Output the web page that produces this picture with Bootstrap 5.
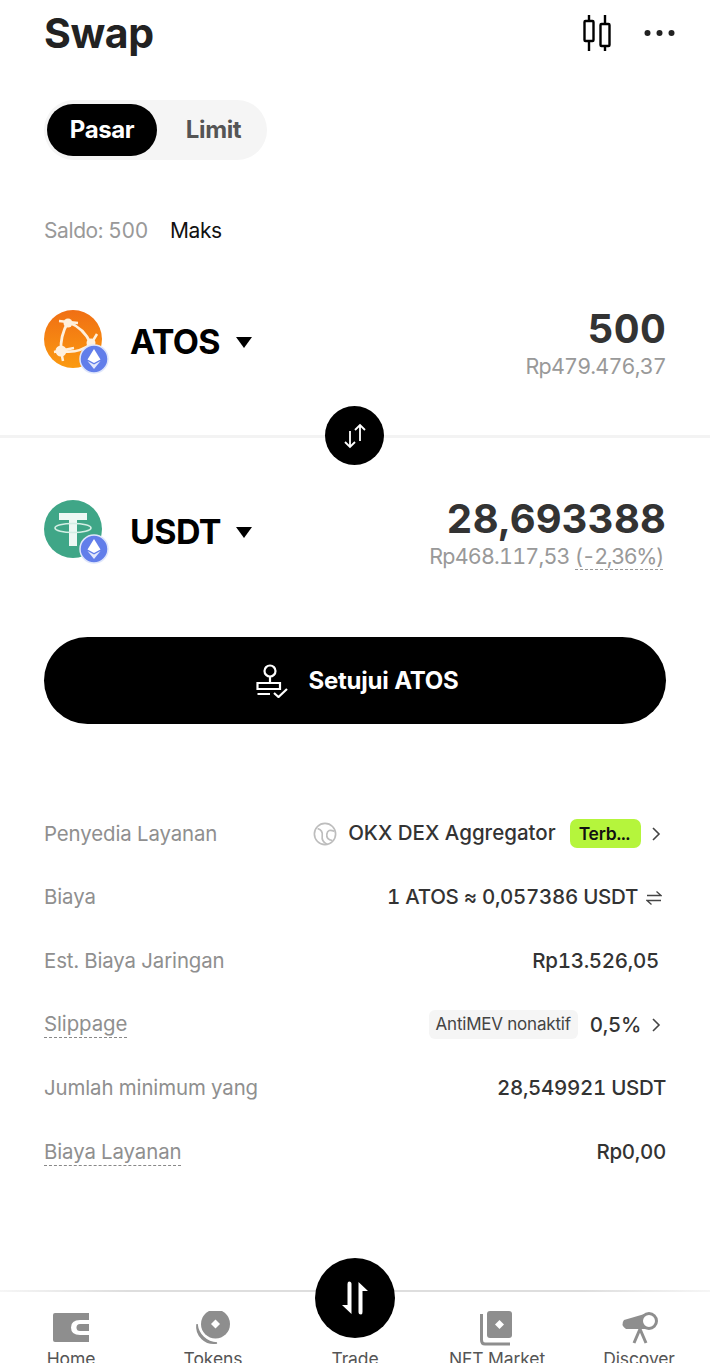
<!DOCTYPE html>
<html lang="id">
<head>
  <meta charset="UTF-8">
  <title>Swap</title>
  <link href="https://cdn.jsdelivr.net/npm/bootstrap@5.3.0/dist/css/bootstrap.min.css" rel="stylesheet">
  <style>
    html, body { height: 1363px; overflow: hidden; }
    body { font-family: Inter, "Liberation Sans", sans-serif; background: #fff; color: #333; font-variant-numeric: tabular-nums; }
    .page-wrap { height: 1363px; }
    .pad-x { padding-left: 44px; padding-right: 44px; }

    .top-bar { height: 66px; padding-right: 35px; }
    .swap-title { font-size: 41px; font-weight: 700; color: #222; letter-spacing: -.4px; line-height: 66px; margin: 0; }
    .top-icons { gap: 32px; }

    .seg-box { width: 223px; height: 60px; margin-top: 34px; padding: 4px 3px; background: #f5f5f5; border-radius: 30px; }
    .seg-on { width: 110px; background: #000; color: #fff; border-radius: 26px; font-size: 24px; font-weight: 700; letter-spacing: -.4px; }
    .seg-off { flex: 1; color: #555; font-size: 24px; font-weight: 700; letter-spacing: -.4px; padding-left: 6px; }

    .saldo-line { margin-top: 57px; font-size: 21px; line-height: 28px; gap: 22px; letter-spacing: -.4px; }
    .saldo-txt { color: #999; }
    .maks-txt { color: #111; }

    .token-row { height: 76px; }
    .row-atos { margin-top: 56px; }
    .coin-wrap { position: relative; width: 58px; height: 58px; margin-right: 28px; flex: none; }
    .coin-wrap > svg { display: block; }
    .eth-badge { position: absolute; right: -7px; bottom: -6px; width: 30px; height: 30px; }
    .coin-name { font-size: 34px; font-weight: 700; color: #000; letter-spacing: -.6px; line-height: 40px; margin-top: 6px; }
    .caret-down { width: 0; height: 0; border-left: 8.5px solid transparent; border-right: 8.5px solid transparent; border-top: 11px solid #000; margin-left: 15.5px; margin-top: 6px; }
    .amount-box { margin-top: 7px; }
    .amount { font-size: 40px; font-weight: 700; color: #333; line-height: 46px; letter-spacing: .2px; }
    .fiat { font-size: 21.5px; color: #999; line-height: 28px; letter-spacing: -.8px; }
    .dash-under { border-bottom: 1px dashed #999; margin-right: 3px; letter-spacing: -1.4px; }

    .mid-split { position: relative; height: 3px; background: #f3f3f3; margin-top: 58px; margin-bottom: 53px; }
    .flip-btn { position: absolute; left: 325px; top: -29px; width: 59px; height: 59px; border-radius: 50%; background: #000; border: 0; padding: 0; }

    .approve-btn { height: 87px; margin-top: 70px; padding-left: 17px; background: #000; border: 0; border-radius: 44px; color: #fff; font-size: 24px; font-weight: 700; gap: 20px; letter-spacing: -.2px; width: 100%; }
    .approve-btn:hover { background: #000; color: #fff; }

    .detail-list { margin-top: 78px; }
    .detail-row { height: 63.7px; font-size: 20.5px; }
    .detail-lbl { color: #8f8f8f; font-size: 20.4px; letter-spacing: -.1px; }
    .detail-val { color: #333; font-weight: 500; letter-spacing: -.3px; }
    .dash-lbl { border-bottom: 1px dashed #888; line-height: 26px; }
    .chev { margin-left: 7px; margin-right: 2px; flex: none; }
    .okx-mark { margin-right: 11px; flex: none; }
    .okx-name { letter-spacing: 0; }
    .best-tag { background: #b5f53c; color: #111; font-size: 17.5px; font-weight: 600; border-radius: 7px; padding: 0 11px 0 9px; height: 29px; line-height: 29px; margin-left: 14px; letter-spacing: -.2px; }
    .mev-tag { background: #f5f5f5; color: #444; font-size: 17px; font-weight: 400; border-radius: 6px; padding: 0 7px; height: 29px; line-height: 29px; margin-right: 12px; letter-spacing: -.2px; }
    .fee-val { margin-right: 7px; }

    .bottom-bar { position: absolute; left: 0; right: 0; top: 1290px; height: 73px; border-top: 2px solid #e4e4e4; border-image: linear-gradient(90deg, #f6f6f6, #dedede 18%, #dedede 82%, #f6f6f6) 1; background: #fff; overflow: hidden; padding-top: 19px; }
    .tab-item { width: 142px; color: #555; font-size: 17.5px; line-height: 22px; flex: none; letter-spacing: -.1px; }
    .tab-item svg { display: block; flex: none; margin-bottom: 1px; }
    .tab-space { height: 36px; flex: none; margin-bottom: 1px; }
    .tab-item span { flex: none; }
    .trade-btn { position: absolute; left: 315px; top: 1258px; width: 80px; height: 80px; border-radius: 50%; background: #000; border: 0; padding: 0; }
  </style>
</head>
<body>
<div class="page-wrap position-relative">

  <div class="top-bar pad-x d-flex justify-content-between align-items-center">
    <h1 class="swap-title">Swap</h1>
    <div class="d-flex align-items-center top-icons">
      <svg width="30" height="36" viewBox="0 0 30 36" fill="none" stroke="#000" stroke-width="2.4">
        <path d="M7 0v6M7 26v10M23 0v9M23 31v5"/>
        <rect x="2.500" y="6" width="9" height="20" rx="1"/>
        <rect x="18.500" y="9" width="9" height="22" rx="1"/>
      </svg>
      <svg width="31" height="8" viewBox="0 0 31 8" fill="#222">
        <circle cx="3.500" cy="4" r="3"/><circle cx="15.500" cy="4" r="3"/><circle cx="27.500" cy="4" r="3"/>
      </svg>
    </div>
  </div>

  <div class="pad-x">
    <div class="seg-box d-flex">
      <div class="seg-on d-flex align-items-center justify-content-center">Pasar</div>
      <div class="seg-off d-flex align-items-center justify-content-center">Limit</div>
    </div>
    <div class="saldo-line d-flex">
      <span class="saldo-txt">Saldo: 500</span>
      <span class="maks-txt">Maks</span>
    </div>
  </div>

  <div class="token-row row-atos pad-x d-flex justify-content-between align-items-center">
    <div class="d-flex align-items-center">
      <div class="coin-wrap">
        <svg width="58" height="58" viewBox="0 0 58 58">
          <defs>
            <linearGradient id="atosGrad" x1="0" y1="0" x2="0" y2="1">
              <stop offset="0" stop-color="#f06f14"/><stop offset="1" stop-color="#fb9a10"/>
            </linearGradient>
          </defs>
          <circle cx="29" cy="29" r="29" fill="url(#atosGrad)"/>
          <path d="M24 12Q40 18 47 34Q34 44 17 41Q16 26 24 12" fill="none" stroke="#fff0dc" stroke-width="2.800"/>
          <path d="M15 11L34 13M17 41L19 51M47 34L53 24M10 42L30 38" stroke="#fff0dc" stroke-width="2.500"/>
          <circle cx="24" cy="13" r="4.500" fill="#fff0dc"/>
          <circle cx="17" cy="41" r="5.500" fill="#fff0dc"/>
          <circle cx="47" cy="33" r="4.500" fill="#fff0dc"/>
        </svg>
        <svg class="eth-badge" viewBox="0 0 30 30">
          <circle cx="15" cy="15" r="14" fill="#627eea" stroke="#dfe6fb" stroke-width="1.500"/>
          <path d="M15 5L8.500 15.500L15 19L21.500 15.500Z" fill="#fff"/>
          <path d="M8.500 17L15 25L21.500 17L15 20.500Z" fill="#e4e9fb"/>
        </svg>
      </div>
      <span class="coin-name">ATOS</span>
      <span class="caret-down"></span>
    </div>
    <div class="text-end amount-box">
      <div class="amount">500</div>
      <div class="fiat">Rp479.476,37</div>
    </div>
  </div>

  <div class="mid-split">
    <button class="flip-btn d-flex align-items-center justify-content-center" type="button" aria-label="Tukar">
      <svg width="24" height="26" viewBox="0 0 24 26" fill="none" stroke="#fff" stroke-width="1.800">
        <path d="M7 8v16M2 19l5 5 5-5M17 18V2M12 7l5-5 5 5"/>
      </svg>
    </button>
  </div>

  <div class="token-row pad-x d-flex justify-content-between align-items-center">
    <div class="d-flex align-items-center">
      <div class="coin-wrap">
        <svg width="58" height="58" viewBox="0 0 58 58">
          <circle cx="29" cy="29" r="29" fill="#3fa687"/>
          <path d="M15 13H43V20H33V46H25V20H15Z" fill="#eef8f4"/>
          <ellipse cx="29" cy="28" rx="18" ry="4.500" fill="none" stroke="#d3eee4" stroke-width="1.600"/>
        </svg>
        <svg class="eth-badge" viewBox="0 0 30 30">
          <circle cx="15" cy="15" r="14" fill="#627eea" stroke="#dfe6fb" stroke-width="1.500"/>
          <path d="M15 5L8.500 15.500L15 19L21.500 15.500Z" fill="#fff"/>
          <path d="M8.500 17L15 25L21.500 17L15 20.500Z" fill="#e4e9fb"/>
        </svg>
      </div>
      <span class="coin-name">USDT</span>
      <span class="caret-down"></span>
    </div>
    <div class="text-end amount-box">
      <div class="amount">28,693388</div>
      <div class="fiat">Rp468.117,53 <span class="dash-under">(-2,36%)</span></div>
    </div>
  </div>

  <div class="pad-x">
    <button class="approve-btn btn d-flex align-items-center justify-content-center" type="button">
      <svg width="32" height="34" viewBox="0 0 32 34" fill="none" stroke="#fff" stroke-width="2.200">
        <circle cx="14" cy="7" r="5.500"/>
        <path d="M14 12.500V19M1.500 19H24V25H1.500ZM1.500 30H14M18 29l4.500 4L31 25"/>
      </svg>
      <span>Setujui ATOS</span>
    </button>

    <div class="detail-list">
      <div class="detail-row d-flex justify-content-between align-items-center">
        <span class="detail-lbl">Penyedia Layanan</span>
        <div class="d-flex align-items-center detail-val">
          <svg class="okx-mark" width="24" height="24" viewBox="0 0 26 26" fill="none" stroke="#bdbdbd" stroke-width="1.800">
            <circle cx="13" cy="13" r="11.500"/>
            <path d="M5 7q6 2 5 8t5 9M23 10q-7-3-8 3t6 7"/>
          </svg>
          <span class="okx-name">OKX DEX Aggregator</span>
          <span class="best-tag">Terb...</span>
          <svg class="chev" width="16" height="16" viewBox="0 0 16 16" fill="none" stroke="#444" stroke-width="1.600"><path d="M5 2l6 6-6 6"/></svg>
        </div>
      </div>
      <div class="detail-row d-flex justify-content-between align-items-center">
        <span class="detail-lbl">Biaya</span>
        <div class="d-flex align-items-center detail-val">
          <span>1 ATOS ≈ 0,057386 USDT</span>
          <svg class="ms-2 me-1" width="16" height="16" viewBox="0 0 16 16" fill="none" stroke="#444" stroke-width="1.300"><path d="M1 5.500H15L10.500 1.500M15 10.500H1L5.500 14.500"/></svg>
        </div>
      </div>
      <div class="detail-row d-flex justify-content-between align-items-center">
        <span class="detail-lbl">Est. Biaya Jaringan</span>
        <span class="detail-val fee-val">Rp13.526,05</span>
      </div>
      <div class="detail-row d-flex justify-content-between align-items-center">
        <span class="detail-lbl dash-lbl">Slippage</span>
        <div class="d-flex align-items-center detail-val">
          <span class="mev-tag">AntiMEV nonaktif</span>
          <span>0,5%</span>
          <svg class="chev" width="16" height="16" viewBox="0 0 16 16" fill="none" stroke="#444" stroke-width="1.600"><path d="M5 2l6 6-6 6"/></svg>
        </div>
      </div>
      <div class="detail-row d-flex justify-content-between align-items-center">
        <span class="detail-lbl">Jumlah minimum yang</span>
        <span class="detail-val">28,549921 USDT</span>
      </div>
      <div class="detail-row d-flex justify-content-between align-items-center">
        <span class="detail-lbl dash-lbl">Biaya Layanan</span>
        <span class="detail-val">Rp0,00</span>
      </div>
    </div>
  </div>

  <nav class="bottom-bar d-flex justify-content-center">
    <div class="tab-item d-flex flex-column align-items-center">
      <svg width="38" height="36" viewBox="0 0 38 36" fill="#8e8e8e">
        <path d="M3 2H37V9H28Q19 9 19 16.500T28 24H37V31H3Q1 31 1 29V4Q1 2 3 2Z"/>
        <path d="M28 13H37V20H28Q24.500 20 24.500 16.500T28 13Z"/>
      </svg>
      <span>Home</span>
    </div>
    <div class="tab-item d-flex flex-column align-items-center">
      <svg width="36" height="36" viewBox="0 0 36 36">
        <path d="M2 13A17 17 0 0 0 22 32A21 21 0 0 1 2 13Z" fill="#8e8e8e" stroke="#8e8e8e" stroke-width="1.500"/>
        <circle cx="20.500" cy="13" r="14.500" fill="#8e8e8e"/>
        <path d="M20.500 8.500L25 13L20.500 17.500L16 13Z" fill="#fff"/>
      </svg>
      <span>Tokens</span>
    </div>
    <div class="tab-item d-flex flex-column align-items-center">
      <div class="tab-space"></div>
      <span>Trade</span>
    </div>
    <div class="tab-item d-flex flex-column align-items-center">
      <svg width="34" height="36" viewBox="0 0 34 36" fill="#8e8e8e">
        <rect x="7" y="0" width="25" height="27" rx="3"/>
        <path d="M19.500 9L24 13.500L19.500 18L15 13.500Z" fill="#fff"/>
        <path d="M1.500 3V29Q1.500 33 5 33H30" fill="none" stroke="#8e8e8e" stroke-width="3"/>
      </svg>
      <span>NFT Market</span>
    </div>
    <div class="tab-item d-flex flex-column align-items-center">
      <svg width="38" height="36" viewBox="0 0 38 36" fill="#8e8e8e">
        <path d="M4 9L28 2V18L6 18Q0 14 4 9Z"/>
        <circle cx="29" cy="10" r="7.500" fill="#fff" stroke="#8e8e8e" stroke-width="3"/>
        <path d="M20 18L14 32M20 18L26 32" fill="none" stroke="#8e8e8e" stroke-width="3"/>
      </svg>
      <span>Discover</span>
    </div>
  </nav>

  <button class="trade-btn d-flex align-items-center justify-content-center" type="button" aria-label="Trade">
    <svg width="30" height="36" viewBox="0 0 30 36" fill="#fff">
      <path d="M9 1.500Q11.500 1.500 11.500 4V34L2 25H7.500V4Q7.500 1.500 9 1.500Z"/>
      <path d="M21 34.500Q18.500 34.500 18.500 32V2L28 11H22.500V32Q22.500 34.500 21 34.500Z"/>
    </svg>
  </button>
</div>
<script src="https://cdn.jsdelivr.net/npm/bootstrap@5.3.0/dist/js/bootstrap.bundle.min.js"></script>
</body>
</html>
